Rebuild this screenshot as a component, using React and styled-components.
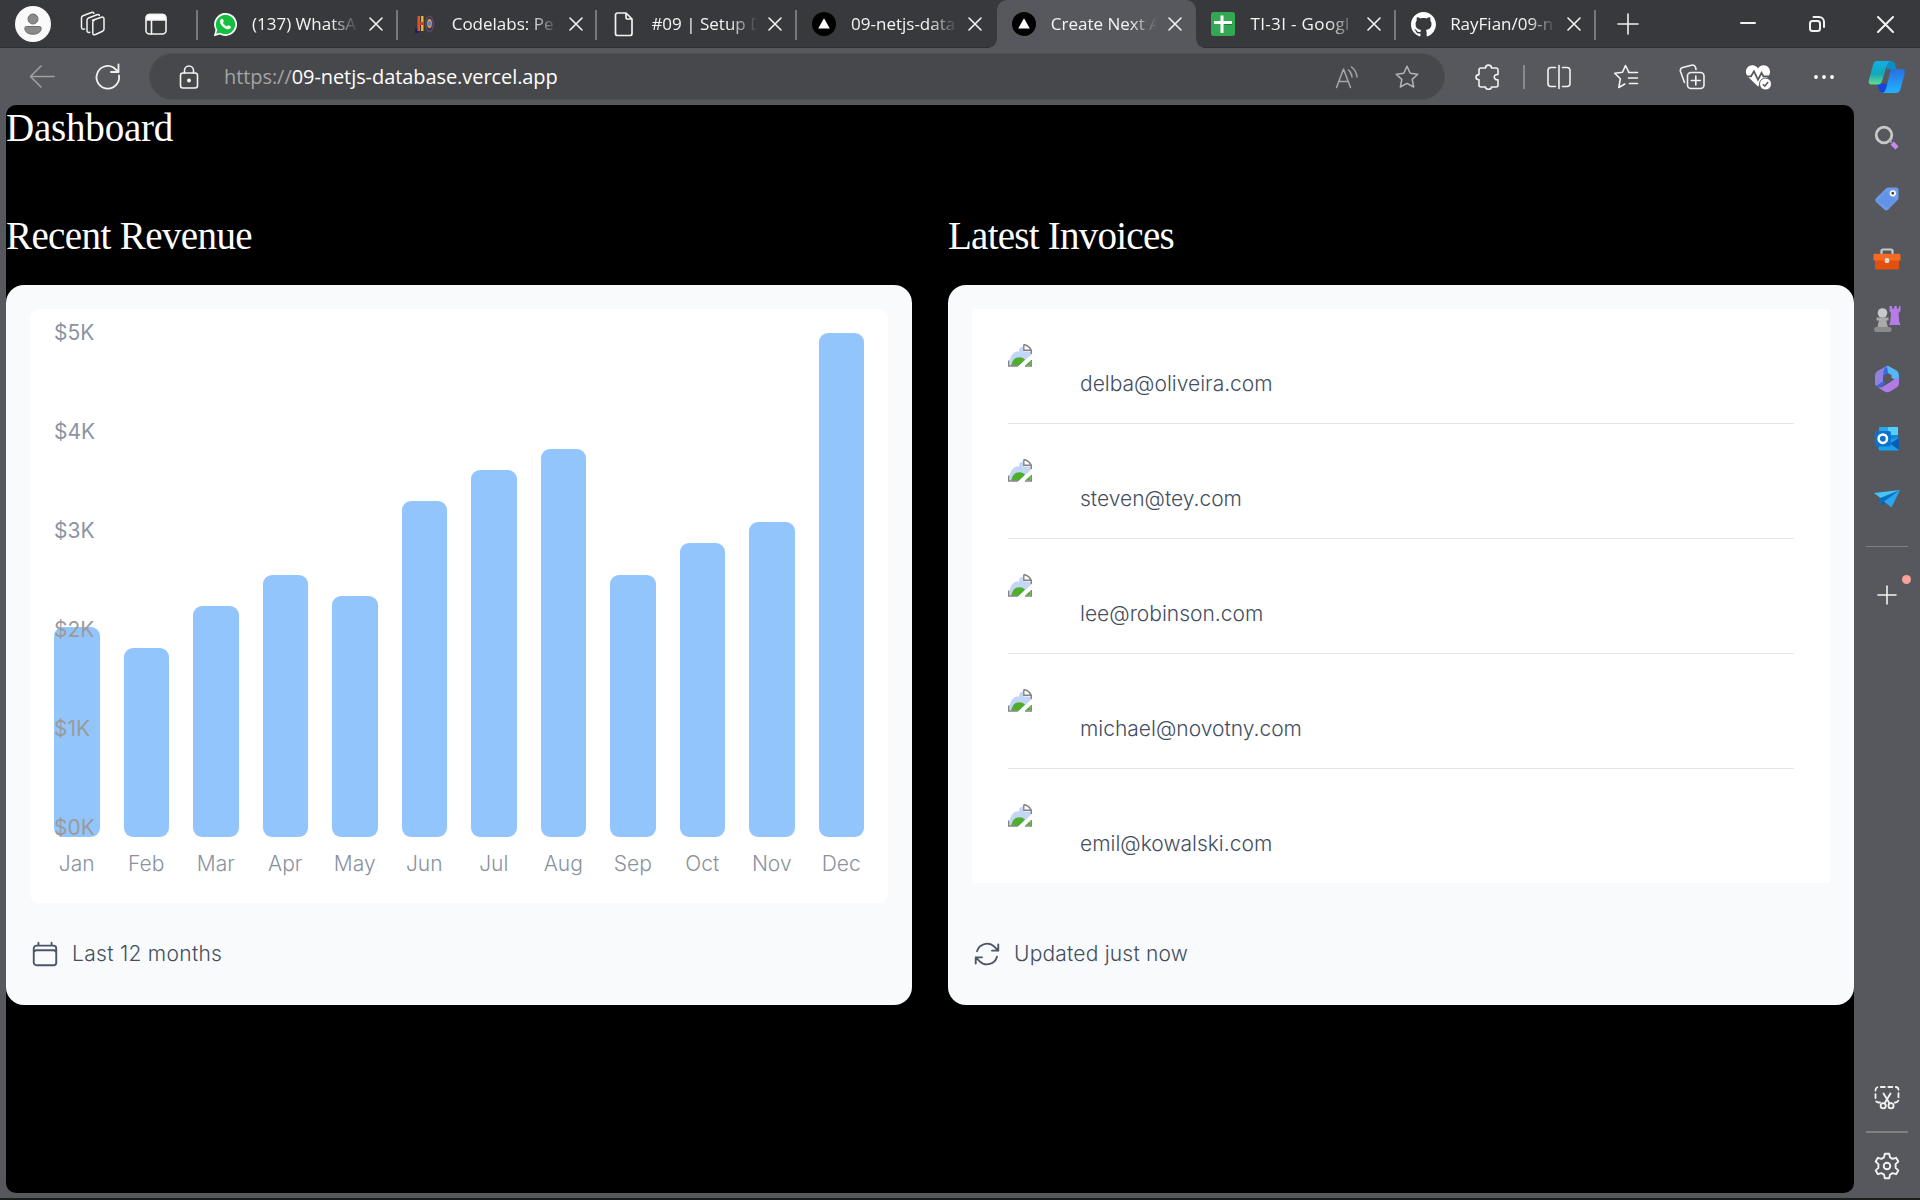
import React from "react";
import styled, { createGlobalStyle, css } from "styled-components";

const frame = "#57585d";
const strip = "#38393d";

const GlobalStyle = createGlobalStyle`
  *, *::before, *::after { box-sizing: border-box; }
  html, body { margin: 0; padding: 0; background: #1b1b1d; overflow: hidden; }
  svg { display: block; flex: none; }
`;

/* ---------- Browser window ---------- */
const Window = styled.div`
  width: 1920px;
  height: 1200px;
  display: flex;
  flex-direction: column;
  background: ${frame};
  border-bottom: 2px solid #1d1d20;
  font-family: "Open Sans", "Noto Sans", sans-serif;
  color: #fff;
  overflow: hidden;
`;

const TabStrip = styled.header`
  height: 48px;
  flex: none;
  display: flex;
  align-items: stretch;
  background: ${strip};
  box-shadow: inset 0 -1px 0 #2e2f32;
`;

const Slot = styled.div`
  width: ${(p) => p.$w}px;
  flex: none;
  display: flex;
  align-items: center;
  justify-content: center;
`;

const Avatar = styled.div`
  width: 36px;
  height: 36px;
  border-radius: 50%;
  background: #fafafa;
  display: flex;
  align-items: center;
  justify-content: center;
`;

const TabRow = styled.div`
  display: flex;
  align-items: stretch;
  margin-left: 4px;
`;

const Tab = styled.div`
  position: relative;
  width: 199.7px;
  flex: none;
  display: flex;
  align-items: center;
  padding-left: 15px;
  ${(p) =>
    p.$active &&
    css`
      background: ${frame};
      border-radius: 10px 10px 0 0;
      &::before,
      &::after {
        content: "";
        position: absolute;
        bottom: 0;
        width: 9px;
        height: 9px;
      }
      &::before {
        left: -9px;
        background: radial-gradient(circle at 0 0, transparent 8.5px, ${frame} 9px);
      }
      &::after {
        right: -9px;
        background: radial-gradient(circle at 100% 0, transparent 8.5px, ${frame} 9px);
      }
    `}
`;

const FirstDivider = styled.i`
  width: 2px;
  height: 30px;
  margin-top: 10px;
  background: #77787b;
`;

const TabDivider = styled.i`
  position: absolute;
  right: 0;
  top: 10px;
  width: 2px;
  height: 30px;
  background: #77787b;
`;

const Favicon = styled.div`
  width: 24px;
  display: flex;
  justify-content: center;
`;

const TabTitle = styled.div`
  width: 112px;
  margin-left: 15px;
  font-size: 17px;
  line-height: 24px;
  letter-spacing: ${(p) => p.$ls || 0}px;
  white-space: nowrap;
  color: #f4f4f4;
  mask-image: linear-gradient(90deg, #000 70%, transparent 95%);
`;

const TabClose = styled.div`
  margin-left: 5px;
`;

const Spacer = styled.div`
  flex: 1;
`;

const Toolbar = styled.nav`
  height: 57px;
  flex: none;
  display: flex;
  align-items: center;
  padding-left: 9px;
`;

const AddressBar = styled.div`
  width: 1294px;
  height: 45px;
  margin: 0 11px 0 9px;
  border-radius: 23px;
  background: #47484b;
  box-shadow: 0 0 0 1px #4e4f53;
  display: flex;
  align-items: center;
  padding-left: 12px;
`;

const Url = styled.div`
  flex: 1;
  margin-left: 8px;
  font-size: 20px;
  line-height: 28px;
  letter-spacing: -0.07px;
  color: #fff;
  span { color: #a3a4a6; }
`;

const VLine = styled.i`
  width: 2px;
  height: 24px;
  background: #88898c;
`;

const HLine = styled.i`
  width: 42px;
  height: ${(p) => p.$h}px;
  flex: none;
  background: #7f8084;
`;

const Body = styled.div`
  flex: 1;
  display: flex;
  min-height: 0;
  padding: 0 0 5px 6px;
`;

const Sidebar = styled.aside`
  width: 66px;
  flex: none;
  display: flex;
  flex-direction: column;
  align-items: center;
  padding: 4px 0 2px;
`;

const SideItem = styled.div`
  position: relative;
  width: 66px;
  height: ${(p) => p.$h || 60}px;
  flex: none;
  display: flex;
  align-items: center;
  justify-content: center;
`;

const Dot = styled.b`
  position: absolute;
  right: 9px;
  top: 11px;
  width: 9px;
  height: 9px;
  border-radius: 50%;
  background: #f9a19a;
`;

/* ---------- Dashboard page ---------- */
const Page = styled.main`
  width: 1848px;
  flex: none;
  background: #000;
  border-radius: 10px;
  overflow: hidden;
`;

const Heading = styled.h2`
  margin: 0;
  height: 48px;
  font: 400 39px/46px "Liberation Serif", serif;
  letter-spacing: ${(p) => p.$ls}px;
  color: #fff;
  white-space: nowrap;
`;

const Columns = styled.div`
  display: grid;
  grid-template-columns: 1fr 1fr;
  gap: 36px;
  margin-top: 60px;
`;

const Section = styled.section`
  display: flex;
  flex-direction: column;
  gap: 24px;
`;

const Card = styled.div`
  height: 720px;
  padding: 24px;
  border-radius: 18px;
  background: #f9fafc;
  display: flex;
  flex-direction: column;
  justify-content: space-between;
  font-family: Inter, sans-serif;
`;

const ChartPanel = styled.div`
  height: 594px;
  padding: 24px;
  border-radius: 9px;
  background: #fff;
  display: grid;
`;

const Bars = styled.div`
  grid-area: 1 / 1;
  display: grid;
  grid-template-columns: repeat(12, 1fr);
  gap: 24px;
  align-items: end;
`;

const Month = styled.div`
  display: flex;
  flex-direction: column;
  align-items: center;
  gap: 12px;
`;

const Bar = styled.div`
  width: 100%;
  border-radius: 9px;
  background: #93c5fd;
`;

const Label = styled.div`
  font-size: 21px;
  line-height: 30px;
  font-weight: 350;
  color: #8a92a0;
`;

const Axis = styled.div`
  grid-area: 1 / 1;
  z-index: 1;
  height: 525px;
  margin-top: -15px;
  display: flex;
  flex-direction: column;
  justify-content: space-between;
`;

const Tick = styled.div`
  font-size: 21px;
  line-height: 30px;
  color: ${(p) => (p.$over ? "#9b9a9b" : "#8c94a2")};
`;

const CardFooter = styled.div`
  display: flex;
  align-items: center;
  gap: 12px;
  height: 30px;
  margin-bottom: 12px;
  font-size: 21px;
  font-weight: 350;
  line-height: 30px;
  letter-spacing: ${(p) => p.$ls || 0}px;
  color: #434e5f;
  svg { color: #4b5566; }
`;

const InvoiceList = styled.div`
  background: #fff;
  padding: 0 36px;
`;

const Invoice = styled.div`
  height: ${(p) => (p.$first ? 114 : 115)}px;
  border-top: ${(p) => (p.$first ? 0 : 1)}px solid #e2e4e9;
  padding: 24px 0;
  display: flex;
  align-items: center;
  gap: 48px;
`;

const MissingAvatar = styled.div`
  width: 24px;
  height: 24px;
  align-self: flex-start;
  margin-top: 10px;
`;

const Email = styled.div`
  align-self: flex-end;
  font-size: 21px;
  font-weight: 350;
  line-height: 30px;
  color: #434e5f;
`;

/* ---------- Icons ---------- */
const Svg = ({ w = 24, h = w, sw = 1.6, c = "#f2f2f2", children }) => (
  <svg width={w} height={h} viewBox={`0 0 ${w} ${h}`} fill="none" stroke={c} strokeWidth={sw} strokeLinecap="round" strokeLinejoin="round">
    {children}
  </svg>
);

const PersonIcon = () => (
  <svg width="18" height="22" viewBox="0 0 18 22">
    <circle cx="9" cy="6" r="5" fill="#8a8a8a" stroke="#6d6d6d" />
    <path d="M2.6 13.5h12.8a1.8 1.8 0 0 1 1.8 1.9c0 3.500-3.400 5.800-8.200 5.800S.8 18.900.8 15.400a1.800 1.800 0 0 1 1.800-1.900z" fill="#8a8a8a" stroke="#6d6d6d" />
  </svg>
);
const WorkspacesIcon = () => (
  <Svg w={26} sw={1.5}>
    <path d="M12.500 9.300 21.500 6.200Q24 5.600 24 8v10q0 1.600-1.500 2.200l-7 3.300Q12.800 24.500 12.800 22V11.500q0-1.700 1.500-2.300" />
    <path d="M9.800 21.200Q7 22 7 19.500V9.300Q7 7.600 8.500 7L17 3.700q1.800-.6 2.400.8" />
    <path d="M4.500 18Q1.500 18.700 1.500 16V6.800q0-1.500 1.500-2.100L11.500 1.500q1.700-.6 2.400.8" />
  </Svg>
);
const TabActionsIcon = () => (
  <Svg w={24}>
    <rect x="2" y="2.500" width="20" height="19.500" rx="3.500" />
    <path d="M2.500 8V5.500a3 3 0 0 1 3-3h13a3 3 0 0 1 3 3V8z" fill="#fff" />
    <path d="M7.500 8v14" />
  </Svg>
);
const WhatsAppIcon = () => (
  <svg width="25" height="25" viewBox="0 0 25 25">
    <path d="M.8 24.200 2.500 18A11.500 11.500 0 1 1 7 22.500z" fill="#fff" />
    <path d="M3.200 21.800 4.300 17.700A9.700 9.700 0 1 1 7.300 20.700z" fill="#12bf3f" />
    <path d="M8.600 6.800c.5-.3 1.200-.2 1.400.4l.8 1.900c.1.500-.7 1.200-.9 1.600.9 1.800 2.200 3 4.100 3.800.5-.3 1-1.300 1.600-1.200l2 1c.6.4.2 1.700-.4 2.200-1 .9-2.300 1-3.600.5-3.200-1.100-5.200-3.200-6.400-5.900-.6-1.700 0-3.400 1.400-4.300z" fill="#fff" />
  </svg>
);
const CodelabsIcon = () => (
  <svg width="20" height="20" viewBox="0 0 20 20">
    <path d="M0 14h4v5H0z" fill="#12235f" />
    <path d="M2.500 2h2.500v15H2.500z" fill="#e0562b" />
    <path d="M6 2h2.500v15H6z" fill="#efb21b" />
    <path d="M4.500 8h4v3h-4z" fill="#d23a2e" />
    <ellipse cx="14.500" cy="10" rx="3.800" ry="8" fill="#3e3565" stroke="#6a5560" />
    <ellipse cx="14.500" cy="9.500" rx="2.300" ry="4.500" fill="#d9a34e" />
    <ellipse cx="14.500" cy="9.500" rx="1.300" ry="2.800" fill="#4b7bd6" />
  </svg>
);
const FileIcon = () => (
  <Svg w={20} h={25} sw={1.7}>
    <path d="M3.500 1h8.500l6 6v14.500a2 2 0 0 1-2 2H3.500a2 2 0 0 1-2-2V3a2 2 0 0 1 2-2zM12 1v4.500A1.500 1.500 0 0 0 13.500 7H18" />
  </Svg>
);
const VercelIcon = () => (
  <svg width="24" height="24" viewBox="0 0 24 24">
    <circle cx="12" cy="12" r="12" fill="#000" />
    <path d="M12 6.200 17.800 16.500H6.200z" fill="#fff" />
  </svg>
);
const SheetIcon = () => (
  <svg width="24" height="24" viewBox="0 0 24 24">
    <rect width="24" height="24" rx="2.500" fill="#33a852" />
    <path d="M11 3.500v17.500M3 10.500h18" stroke="#fff" strokeWidth="3" />
    <path d="M13.500 12.500H21" stroke="#1f7a39" strokeWidth="1" />
  </svg>
);
const GithubIcon = () => (
  <svg width="25" height="25" viewBox="0 0 16 16" fill="#fff">
    <path d="M8 0C3.580 0 0 3.580 0 8c0 3.540 2.290 6.530 5.470 7.590.4.070.55-.17.55-.38 0-.19-.01-.82-.01-1.490-2.010.37-2.530-.49-2.690-.94-.09-.23-.48-.94-.82-1.130-.28-.15-.68-.52-.01-.53.63-.01 1.080.58 1.230.82.72 1.210 1.870.87 2.330.66.07-.52.28-.87.51-1.070-1.780-.2-3.640-.89-3.640-3.950 0-.87.31-1.590.82-2.150-.08-.2-.36-1.020.08-2.120 0 0 .67-.21 2.200.82.64-.18 1.320-.27 2-.27s1.360.09 2 .27c1.530-1.040 2.200-.82 2.200-.82.44 1.100.16 1.920.08 2.120.51.56.82 1.270.82 2.150 0 3.070-1.870 3.750-3.650 3.950.29.25.54.73.54 1.480 0 1.070-.01 1.930-.01 2.200 0 .21.15.46.55.38A8.010 8.010 0 0 0 16 8c0-4.420-3.580-8-8-8z" />
  </svg>
);
const CloseIcon = ({ w = 14, sw = 1.6 }) => (
  <Svg w={w} sw={sw}>
    <path d={`M1 1 ${w - 1} ${w - 1}M${w - 1} 1 1 ${w - 1}`} />
  </Svg>
);
const PlusIcon = ({ w = 22 }) => (
  <Svg w={w}>
    <path d={`M${w / 2} 1v${w - 2}M1 ${w / 2}h${w - 2}`} />
  </Svg>
);
const MinimizeIcon = () => (
  <Svg w={16} sw={2}><path d="M1 7h14" /></Svg>
);
const RestoreIcon = () => (
  <Svg w={18} sw={2}>
    <rect x="2" y="6" width="10" height="10" rx="2.500" />
    <path d="M5.500 2H11a5 5 0 0 1 5 5v5" />
  </Svg>
);
const BackIcon = () => (
  <Svg w={26} sw={1.5} c="#a0a1a4"><path d="M25 12.500H2M12 2 1.500 12.500 12 23" /></Svg>
);
const ReloadIcon = () => (
  <Svg w={28} sw={1.8}>
    <path d="M25 12.500A11.300 11.300 0 1 1 19.500 4.500l4.500 4M24.500 1.500v7.500h-7.500" />
  </Svg>
);
const LockIcon = () => (
  <Svg w={20} h={24}>
    <rect x="1.500" y="8" width="17" height="15" rx="2.500" />
    <path d="M5.500 8V5.500a4.500 4.500 0 0 1 9 0V8" />
    <circle cx="10" cy="15.500" r="1.200" fill="#fff" />
  </Svg>
);
const ReadAloudIcon = () => (
  <Svg w={24} c="#a5a6a8" sw={1.5}>
    <path d="M1.500 22.500 8.500 4l7 18.500M4 16.500h9M13.500 5q3 2.500 3.500 7M16.500 2q5 4 5.500 10" />
  </Svg>
);
const star = "M13 2.200 16.200 9.300l7.600.9-5.600 5.200 1.500 7.600L13 19.300 6.300 23l1.500-7.600L2.200 10.200l7.600-.9z";
const StarIcon = () => (
  <Svg w={26} c="#b3b4b6" sw={1.5}><path d={star} /></Svg>
);
const PuzzleIcon = () => (
  <Svg w={26}>
    <path d="M6 4H10.500c0-3.800 6-3.800 6 0H21a2 2 0 0 1 2 2v4.500c-5-.8-5 6 0 5.200V21a2 2 0 0 1-2 2h-4.500c0 3-6 3-6 0H6a2 2 0 0 1-2-2v-5.200c-4-.3-4-4.900 0-5.200V6a2 2 0 0 1 2-2z" />
  </Svg>
);
const SplitIcon = () => (
  <Svg w={26}>
    <path d="M13 1.500v23M9.500 3.500H5a3 3 0 0 0-3 3v13a3 3 0 0 0 3 3h4.500M16.500 3.500H21a3 3 0 0 1 3 3v13a3 3 0 0 1-3 3h-4.500" />
  </Svg>
);
const FavoritesIcon = () => (
  <Svg w={26}>
    <path d="M17 8.500h-1L12.500 1.500 9.500 8.300l-7.800 1 5.600 5.500-1.500 8.700 6-3.500M15.500 8.500H24.500M15.500 14h9M16.500 19.500h8" />
  </Svg>
);
const CollectionsIcon = () => (
  <Svg w={26}>
    <rect x="8.500" y="8.500" width="16.500" height="16" rx="3.500" />
    <path d="M16.800 12v9M12.300 16.500h9M5.500 18.500 1.500 7.500Q.6 4.500 3.600 3.500L12.500 1.200q3-.7 4 2L17 5.500" />
  </Svg>
);
const HeartIcon = () => (
  <svg width="27" height="26" viewBox="0 0 27 26">
    <path d="M13 22.500 2.700 12.500C-1.500 7 2.500 1 7.500 1.200 10 1.300 12 2.800 13 4.500c1-1.700 3-3.200 5.500-3.300 5-.2 9 5.800 4.800 11.300z" fill="#fff" />
    <path d="M0 12.300h6l3-5 4 8.500 3.500-7 2 3.500H26" fill="none" stroke={frame} strokeWidth="1.800" />
    <circle cx="20.500" cy="20" r="6" fill="#fff" stroke={frame} />
    <path d="m17.800 20.300 2 1.800 3.400-4" fill="none" stroke={frame} strokeWidth="1.500" />
  </svg>
);
const DotsIcon = () => (
  <svg width="20" height="6" viewBox="0 0 20 6" fill="#fff"><circle cx="2" cy="3" r="1.900" /><circle cx="10" cy="3" r="1.900" /><circle cx="18" cy="3" r="1.900" /></svg>
);
const CopilotIcon = () => (
  <svg width="38" height="34" viewBox="0 0 38 34">
    <defs>
      <linearGradient id="cpA" x1="0" y1="0" x2="0" y2="1"><stop offset="0" stopColor="#0fb0e8" /><stop offset=".55" stopColor="#14a7b8" /><stop offset="1" stopColor="#63de8c" /></linearGradient>
      <linearGradient id="cpB" x1="0" y1="0" x2="0" y2="1"><stop offset="0" stopColor="#2a6fe0" /><stop offset="1" stopColor="#20b4ff" /></linearGradient>
    </defs>
    <path d="M18 1h5q3 0 4 3l1.500 5h-5q-3 0-4 3z" fill="#0a8fc4" />
    <path d="M9 23.500 11 30q1 3 4 3h4l2-9.500z" fill="#1546d6" />
    <path d="M9 1h13q-2 1-3 4l-5 16q-1 3.500-4 3.500H4q-4.500 0-3-5L5 5Q6 1 9 1z" fill="url(#cpA)" />
    <path d="M24 9h9q5 0 3.500 5l-4 15q-1 4-4.500 4H14.500q2.500-1 3.500-4l4-16.500Q22.500 9 24 9z" fill="url(#cpB)" />
    <path d="M19.500 9.500h2.300q-1 1-1.400 2.500l-3 11.500h-2.600q1-1 1.300-2.500z" fill={frame} />
  </svg>
);
const SearchIcon = () => (
  <svg width="26" height="28" viewBox="0 0 26 28" fill="none">
    <circle cx="10" cy="10" r="7.800" stroke="#c9c9c9" strokeWidth="2.800" />
    <path d="m15.500 15.500 2 2" stroke="#aaa" strokeWidth="2" />
    <path d="m18.200 18.200 4.800 4.800" stroke="#c58cf0" strokeWidth="4.500" />
  </svg>
);
const TagIcon = () => (
  <svg width="26" height="26" viewBox="0 0 26 26">
    <path d="M14.500 1.500H22q2.500 0 2.500 2.500v7.500q0 1.500-1 2.600l-9.500 9.700q-1.800 1.600-3.500 0L2 16q-1.700-1.900 0-3.700L12 2.500q1-1 2.500-1z" fill="#6b9bea" />
    <path d="M3 15 12 5l9.500 9-7.500 8z" fill="#5c8be2" opacity=".5" />
    <circle cx="18.800" cy="7.300" r="2.300" fill="#444" stroke="#fff" strokeWidth="1.700" />
  </svg>
);
const ToolboxIcon = () => (
  <svg width="28" height="24" viewBox="0 0 28 24">
    <path d="M8.500 7V4.200q0-1.700 1.700-1.700h7.600q1.700 0 1.700 1.700V7" fill="none" stroke="#c4c8cb" strokeWidth="2.200" />
    <path d="M2 12h24v9q0 1.500-1.500 1.500h-21Q2 22.500 2 21z" fill="#e2500c" />
    <rect x=".5" y="6.800" width="27" height="6.800" rx="1.200" fill="#f46a22" />
    <rect x="11.800" y="11" width="4.400" height="5" rx="1.500" fill="#d7dadc" />
  </svg>
);
const GamesIcon = () => (
  <svg width="28" height="28" viewBox="0 0 28 28">
    <path d="M16.500 1h2.500v2.500h2.200V1h2.600v2.500H26V1h1.500v5l-2 2 .8 9 1.200 3H16l1.200-3 .8-9-1.500-2z" fill="#b57ce8" />
    <circle cx="9.500" cy="8" r="4.800" fill="#c8c8c8" />
    <path d="M3.500 12.500h12v3h-2.200l1.500 6.500H4.500L6 15.500H3.500z" fill="#aaa" />
    <rect x="1" y="22" width="17.500" height="5" rx="2.200" fill="#8b8b8b" />
  </svg>
);
const OfficeIcon = () => (
  <svg width="26" height="28" viewBox="0 0 26 28">
    <path d="M11 2 3.500 6Q1 7.500 1 10.500v8q0 2 2 3L9 18.500V10l6-3.500V1q-2-.5-4 1z" fill="#9181e0" />
    <path d="M15 1.200 22.500 5.500Q25 7 25 10v6.500L17.500 13V10L13 7.500 9.500 9.500 11.500 3q1-3 3.500-1.800z" fill="#54b8f5" />
    <path d="M13 1.500Q10 3 9.500 6v10L2 21Q4 23 7 21.500l4-3V10l3-2z" fill="#3d68dc" />
    <path d="M25 16v2q0 3-2.500 4.500l-6 3.800q-3.500 1.700-6.500 0L4 22.500q3 .5 6-1.500l7-4.500L24 12z" fill="#b07be6" />
    <circle cx="13.200" cy="14" r="4.300" fill={frame} />
  </svg>
);
const OutlookIcon = () => (
  <svg width="26" height="26" viewBox="0 0 26 26">
    <rect x="5" y="1" width="19" height="22" rx="1" fill="#28a8ea" />
    <path d="M14 1h10v8H14z" fill="#50d0ff" />
    <path d="M14 9h10v6H14z" fill="#1187dc" />
    <path d="M4.500 15 25 12v11q0 1.500-1.500 1.500H6q-1.500 0-1.500-1.500z" fill="#16a1ee" />
    <path d="m16 17.500 9-5.500v12z" fill="#0a5cad" />
    <rect x=".8" y="5" width="16" height="15.500" rx="1.500" fill="#0b72cd" />
    <circle cx="8.800" cy="12.700" r="4.200" fill="none" stroke="#fff" strokeWidth="2.500" />
  </svg>
);
const TelegramIcon = () => (
  <svg width="28" height="20" viewBox="0 0 28 20">
    <path d="M1 4 27 1 12 12.500z" fill="#46c4f8" />
    <path d="m6 9.500 2 6.500 19-15z" fill="#0a6fbf" />
    <path d="M27 1 18.500 18.500 11 12.500z" fill="#2aa5ee" />
    <path d="m8 16.500 4-1.800-2.300-2z" fill="#0d5ca2" />
  </svg>
);
const SnipIcon = () => (
  <Svg w={26} sw={1.8}>
    <path d="M6 17.500H4.500a3 3 0 0 1-3-3V5a3 3 0 0 1 3-3h17a3 3 0 0 1 3 3v9.500a3 3 0 0 1-3 3H20" strokeDasharray="4 3.500" />
    <circle cx="9.200" cy="20.800" r="2.600" /><circle cx="17" cy="20.800" r="2.600" />
    <path d="M10.500 18.500 16.500 8.500M15.600 18.500 9.500 8.500" />
  </Svg>
);
const GearIcon = () => (
  <Svg w={26} h={28} sw={1.9}>
    <circle cx="13" cy="14" r="3.300" />
    <path d="M10.800 1.800h4.400l.8 3.600 2.600 1.500 3.500-1.100 2.200 3.800-2.700 2.500v3.800l2.700 2.500-2.200 3.800-3.500-1.100-2.600 1.500-.8 3.600h-4.400l-.8-3.600-2.600-1.500-3.500 1.100-2.200-3.800 2.700-2.500v-3.800L1.700 9.600l2.200-3.800 3.500 1.100L10 5.400z" />
  </Svg>
);
const Hero = ({ d }) => (
  <svg width="30" height="30" viewBox="0 0 24 24" fill="none" stroke="currentColor" strokeWidth="1.500" strokeLinecap="round" strokeLinejoin="round">
    <path d={d} />
  </svg>
);
const calendarPath =
  "M6.750 3v2.250M17.250 3v2.250M3 18.750V7.500a2.250 2.250 0 0 1 2.250-2.250h13.500A2.250 2.250 0 0 1 21 7.500v11.250m-18 0A2.250 2.250 0 0 0 5.250 21h13.500A2.250 2.250 0 0 0 21 18.750m-18 0v-7.500A2.250 2.250 0 0 1 5.250 9h13.500A2.250 2.250 0 0 1 21 11.250v7.500";
const refreshPath =
  "M16.023 9.348h4.992v-.001M2.985 19.644v-4.992m0 0h4.992m-4.993 0 3.181 3.183a8.250 8.250 0 0 0 13.803-3.700M4.031 9.865a8.250 8.250 0 0 1 13.803-3.700l3.181 3.182m0-4.991v4.990";
const BrokenImage = () => (
  <svg width="24" height="24" viewBox="0 0 24 24">
    <path d="M1.500 22V18Q3 10.500 8 8.500h3L11.500 5 15.500 3v5.500h8.500V12L12.500 23z" fill="#c4d6f6" />
    <path d="M3 22.800q2-8.600 8.500-8.600 4 0 5.500 2.500l-6 6.100z" fill="#4fae2c" />
    <path d="M.7 17.500V23H11M23.300 17v6H17M15.800 1.500v5.800h7.500V11M15.800 1.500q5 1 7.500 5.800" fill="none" stroke="#848484" strokeWidth="1.400" />
    <path d="M17.500 22.300 22.600 17.500v4.800z" fill="#4fae2c" />
    <path d="M9.500 24 24 11v4.500L15 24z" fill="#fff" />
  </svg>
);

/* ---------- Data ---------- */
const tabs = [
  { icon: WhatsAppIcon, title: "(137) WhatsA", line: true },
  { icon: CodelabsIcon, title: "Codelabs: Pe", line: true },
  { icon: FileIcon, title: "#09 | Setup D", line: true },
  { icon: VercelIcon, title: "09-netjs-data" },
  { icon: VercelIcon, title: "Create Next A", active: true },
  { icon: SheetIcon, title: "TI-3I - Googl", ls: 0.35, line: true },
  { icon: GithubIcon, title: "RayFian/09-n", line: true },
];

const revenue = [
  ["Jan", 2000], ["Feb", 1800], ["Mar", 2200], ["Apr", 2500], ["May", 2300], ["Jun", 3200],
  ["Jul", 3500], ["Aug", 3700], ["Sep", 2500], ["Oct", 2800], ["Nov", 3000], ["Dec", 4800],
];
const ticks = ["$5K", "$4K", "$3K", "$2K", "$1K", "$0K"];
const chartHeight = 525;
const topValue = 5000;

const emails = [
  "delba@oliveira.com", "steven@tey.com", "lee@robinson.com", "michael@novotny.com", "emil@kowalski.com",
];

const sideApps = [SearchIcon, TagIcon, ToolboxIcon, GamesIcon, OfficeIcon, OutlookIcon, TelegramIcon];

export default function App() {
  return (
    <>
      <GlobalStyle />
      <Window>
        <TabStrip>
          <Slot $w={66}><Avatar><PersonIcon /></Avatar></Slot>
          <Slot $w={54}><WorkspacesIcon /></Slot>
          <Slot $w={72}><TabActionsIcon /></Slot>
          <TabRow>
            <FirstDivider />
            {tabs.map(({ icon: Icon, title, ls, line, active }) => (
              <Tab key={title} $active={active}>
                <Favicon><Icon /></Favicon>
                <TabTitle $ls={ls}>{title}</TabTitle>
                <TabClose><CloseIcon /></TabClose>
                {line && <TabDivider />}
              </Tab>
            ))}
          </TabRow>
          <Slot $w={65}><PlusIcon /></Slot>
          <Spacer />
          <Slot $w={69}><MinimizeIcon /></Slot>
          <Slot $w={69}><RestoreIcon /></Slot>
          <Slot $w={69}><CloseIcon w={17} sw={2} /></Slot>
        </TabStrip>
        <Toolbar>
          <Slot $w={66}><BackIcon /></Slot>
          <Slot $w={66}><ReloadIcon /></Slot>
          <AddressBar>
            <Slot $w={54}><LockIcon /></Slot>
            <Url><span>https://</span>09-netjs-database.vercel.app</Url>
            <Slot $w={46}><ReadAloudIcon /></Slot>
            <Slot $w={74}><StarIcon /></Slot>
          </AddressBar>
          <Slot $w={66}><PuzzleIcon /></Slot>
          <Slot $w={6}><VLine /></Slot>
          <Slot $w={64}><SplitIcon /></Slot>
          <Slot $w={69}><FavoritesIcon /></Slot>
          <Slot $w={64}><CollectionsIcon /></Slot>
          <Slot $w={69}><HeartIcon /></Slot>
          <Slot $w={61}><DotsIcon /></Slot>
          <Slot $w={65}><CopilotIcon /></Slot>
        </Toolbar>
        <Body>
          <Page>
            <Heading as="h1" $ls={-0.2}>Dashboard</Heading>
            <Columns>
              <Section>
                <Heading $ls={-0.6}>Recent Revenue</Heading>
                <Card>
                  <ChartPanel>
                    <Bars>
                      {revenue.map(([month, value]) => (
                        <Month key={month}>
                          <Bar style={{ height: (value / topValue) * chartHeight }} />
                          <Label>{month}</Label>
                        </Month>
                      ))}
                    </Bars>
                    <Axis>
                      {ticks.map((t, i) => (
                        <Tick key={t} $over={i > 2}>{t}</Tick>
                      ))}
                    </Axis>
                  </ChartPanel>
                  <CardFooter $ls={0.3}><Hero d={calendarPath} />Last 12 months</CardFooter>
                </Card>
              </Section>
              <Section>
                <Heading $ls={-0.75}>Latest Invoices</Heading>
                <Card>
                  <InvoiceList>
                    {emails.map((email, i) => (
                      <Invoice key={email} $first={i === 0}>
                        <MissingAvatar><BrokenImage /></MissingAvatar>
                        <Email>{email}</Email>
                      </Invoice>
                    ))}
                  </InvoiceList>
                  <CardFooter $ls={0.2}><Hero d={refreshPath} />Updated just now</CardFooter>
                </Card>
              </Section>
            </Columns>
          </Page>
          <Sidebar>
            {sideApps.map((Icon, i) => (
              <SideItem key={i}><Icon /></SideItem>
            ))}
            <SideItem $h={35}><HLine $h={1} /></SideItem>
            <SideItem $h={61}><PlusIcon w={20} /><Dot /></SideItem>
            <Spacer />
            <SideItem $h={50}><SnipIcon /></SideItem>
            <SideItem $h={18}><HLine $h={2} /></SideItem>
            <SideItem $h={50}><GearIcon /></SideItem>
          </Sidebar>
        </Body>
      </Window>
    </>
  );
}
